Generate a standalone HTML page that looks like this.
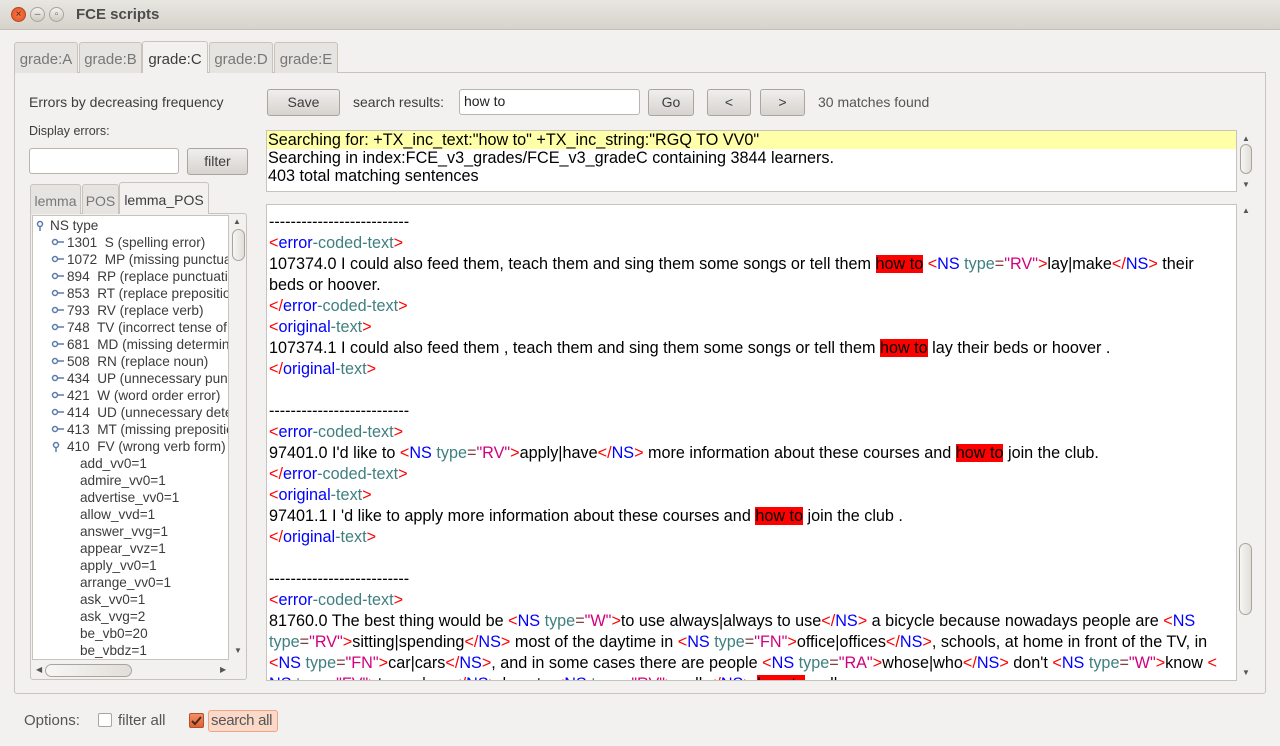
<!DOCTYPE html>
<html><head><meta charset="utf-8">
<style>
*{box-sizing:border-box;margin:0;padding:0}
body{width:1280px;height:746px;overflow:hidden;background:#f2f1f0;font-family:"Liberation Sans",sans-serif;position:relative;color:#3c3c3c}
.a{position:absolute}
.title{left:0;top:0;width:1280px;height:30px;background:linear-gradient(#e8e6e1,#d6d3cc);border-bottom:1px solid #c4c0b8}
.tb{width:15px;height:15px;border-radius:50%;top:7px;border:1px solid #a9a59c;background:linear-gradient(#f3f1ed,#cfcbc3);font-size:10px;line-height:13px;text-align:center;color:#666}
.btn{border:1px solid #aaa69e;border-radius:3px;background:linear-gradient(#f0efed,#d6d3cf);font-size:14px;text-align:center;color:#3c3c3c}
.tab{top:42px;height:31px;border:1px solid #c8c4bc;border-bottom:none;border-radius:3px 3px 0 0;background:#e6e4e0;font-size:15px;color:#777;text-align:center;line-height:34px}
.input{background:#fff;border:1px solid #b9b5ad;border-radius:3px}
.tree{font-size:13.6px;line-height:17px;color:#3c3c3c;white-space:nowrap}
.tree div{height:17px}
.res{font-size:16.2px;line-height:21px;color:#000;white-space:nowrap;font-family:"Liberation Sans",sans-serif}
.r{color:#f00}.b{color:#00f}.t{color:#3f7f7f}.m{color:#d0007f}.e{color:#7f3f3f}
.h{background:#f00;color:#000}
.sb{border:1px solid #a9a59c;border-radius:7px;background:linear-gradient(90deg,#f7f6f4,#e1ded9)}
.k{display:inline-block;width:14px;height:10px;margin-right:2px;vertical-align:0}
</style></head><body>
<div class="a title"></div>
<div class="a tb" style="left:11px;background:radial-gradient(#f47a4e,#e0521e);border-color:#b8461e;color:#5a1a05">×</div>
<div class="a tb" style="left:30px">–</div>
<div class="a tb" style="left:49px">▫</div>
<div class="a" style="left:76px;top:6px;font-size:15px;font-weight:bold;color:#4c4c4c">FCE scripts</div>

<div class="a" style="left:14px;top:72px;width:1252px;height:622px;border:1px solid #c8c4bc;border-radius:0 0 3px 3px;background:#f2f1f0"></div>
<div class="a tab" style="left:14px;width:64px">grade:A</div>
<div class="a tab" style="left:79px;width:63px">grade:B</div>
<div class="a tab" style="left:142px;width:66px;top:41px;height:32px;background:#f2f1f0;color:#3c3c3c;line-height:36px">grade:C</div>
<div class="a tab" style="left:209px;width:64px">grade:D</div>
<div class="a tab" style="left:274px;width:64px">grade:E</div>

<div class="a" style="left:29px;top:94px;font-size:14px">Errors by decreasing frequency</div>
<div class="a" style="left:29px;top:124px;font-size:12.5px">Display errors:</div>
<div class="a input" style="left:29px;top:148px;width:150px;height:26px"></div>
<div class="a btn" style="left:187px;top:148px;width:61px;height:27px;line-height:25px">filter</div>

<div class="a" style="left:30px;top:213px;width:217px;height:467px;border:1px solid #c8c4bc;border-radius:3px"></div>
<div class="a tab" style="left:30px;top:184px;width:51px;height:30px;line-height:32px;font-size:14px">lemma</div>
<div class="a tab" style="left:82px;top:184px;width:37px;height:30px;line-height:32px;font-size:14px">POS</div>
<div class="a tab" style="left:119px;top:182px;width:90px;height:32px;line-height:34px;font-size:14px;background:#f2f1f0;color:#3c3c3c">lemma_POS</div>
<div class="a" style="left:32px;top:215px;width:197px;height:445px;background:#fff;border:1px solid #c8c4bc;overflow:hidden">
<div class="tree" style="position:absolute;left:2px;top:1px">
<div><svg width="12" height="12" style="vertical-align:-2px;margin-right:3px"><circle cx="5" cy="4" r="2.5" fill="none" stroke="#5a7aa8" stroke-width="1.5"/><line x1="5" y1="6" x2="5" y2="11" stroke="#5a7aa8" stroke-width="1.5"/></svg>NS type</div>
</div>
<div class="tree" style="position:absolute;left:18px;top:18px">
<div><svg class="k"><circle cx="4" cy="5" r="2.5" fill="none" stroke="#5a7aa8" stroke-width="1.5"/><line x1="6" y1="5" x2="13" y2="5" stroke="#5a7aa8" stroke-width="1.5"/></svg>1301&nbsp; S (spelling error)</div>
<div><svg class="k"><circle cx="4" cy="5" r="2.5" fill="none" stroke="#5a7aa8" stroke-width="1.5"/><line x1="6" y1="5" x2="13" y2="5" stroke="#5a7aa8" stroke-width="1.5"/></svg>1072&nbsp; MP (missing punctuation)</div>
<div><svg class="k"><circle cx="4" cy="5" r="2.5" fill="none" stroke="#5a7aa8" stroke-width="1.5"/><line x1="6" y1="5" x2="13" y2="5" stroke="#5a7aa8" stroke-width="1.5"/></svg>894&nbsp; RP (replace punctuation)</div>
<div><svg class="k"><circle cx="4" cy="5" r="2.5" fill="none" stroke="#5a7aa8" stroke-width="1.5"/><line x1="6" y1="5" x2="13" y2="5" stroke="#5a7aa8" stroke-width="1.5"/></svg>853&nbsp; RT (replace preposition)</div>
<div><svg class="k"><circle cx="4" cy="5" r="2.5" fill="none" stroke="#5a7aa8" stroke-width="1.5"/><line x1="6" y1="5" x2="13" y2="5" stroke="#5a7aa8" stroke-width="1.5"/></svg>793&nbsp; RV (replace verb)</div>
<div><svg class="k"><circle cx="4" cy="5" r="2.5" fill="none" stroke="#5a7aa8" stroke-width="1.5"/><line x1="6" y1="5" x2="13" y2="5" stroke="#5a7aa8" stroke-width="1.5"/></svg>748&nbsp; TV (incorrect tense of verb)</div>
<div><svg class="k"><circle cx="4" cy="5" r="2.5" fill="none" stroke="#5a7aa8" stroke-width="1.5"/><line x1="6" y1="5" x2="13" y2="5" stroke="#5a7aa8" stroke-width="1.5"/></svg>681&nbsp; MD (missing determiner)</div>
<div><svg class="k"><circle cx="4" cy="5" r="2.5" fill="none" stroke="#5a7aa8" stroke-width="1.5"/><line x1="6" y1="5" x2="13" y2="5" stroke="#5a7aa8" stroke-width="1.5"/></svg>508&nbsp; RN (replace noun)</div>
<div><svg class="k"><circle cx="4" cy="5" r="2.5" fill="none" stroke="#5a7aa8" stroke-width="1.5"/><line x1="6" y1="5" x2="13" y2="5" stroke="#5a7aa8" stroke-width="1.5"/></svg>434&nbsp; UP (unnecessary punctuation)</div>
<div><svg class="k"><circle cx="4" cy="5" r="2.5" fill="none" stroke="#5a7aa8" stroke-width="1.5"/><line x1="6" y1="5" x2="13" y2="5" stroke="#5a7aa8" stroke-width="1.5"/></svg>421&nbsp; W (word order error)</div>
<div><svg class="k"><circle cx="4" cy="5" r="2.5" fill="none" stroke="#5a7aa8" stroke-width="1.5"/><line x1="6" y1="5" x2="13" y2="5" stroke="#5a7aa8" stroke-width="1.5"/></svg>414&nbsp; UD (unnecessary determiner)</div>
<div><svg class="k"><circle cx="4" cy="5" r="2.5" fill="none" stroke="#5a7aa8" stroke-width="1.5"/><line x1="6" y1="5" x2="13" y2="5" stroke="#5a7aa8" stroke-width="1.5"/></svg>413&nbsp; MT (missing preposition)</div>
<div><svg width="12" height="12" style="vertical-align:-2px;margin-right:4px"><circle cx="5" cy="4" r="2.5" fill="none" stroke="#5a7aa8" stroke-width="1.5"/><line x1="5" y1="6" x2="5" y2="11" stroke="#5a7aa8" stroke-width="1.5"/></svg>410&nbsp; FV (wrong verb form)</div>
</div>
<div class="tree" style="position:absolute;left:47px;top:239px">
<div>add_vv0=1</div><div>admire_vv0=1</div><div>advertise_vv0=1</div><div>allow_vvd=1</div><div>answer_vvg=1</div><div>appear_vvz=1</div><div>apply_vv0=1</div><div>arrange_vv0=1</div><div>ask_vv0=1</div><div>ask_vvg=2</div><div>be_vb0=20</div><div>be_vbdz=1</div>
</div>
</div>
<div class="a" style="left:233px;top:217px;font-size:8px;color:#555">▲</div>
<div class="a sb" style="left:232px;top:229px;width:13px;height:32px"></div>
<div class="a" style="left:234px;top:646px;font-size:8px;color:#555">▼</div>
<div class="a sb" style="left:45px;top:664px;width:87px;height:13px"></div>
<div class="a" style="left:36px;top:665px;font-size:8px;color:#555">◀</div>
<div class="a" style="left:220px;top:665px;font-size:8px;color:#555">▶</div>

<div class="a btn" style="left:267px;top:89px;width:73px;height:27px;line-height:25px">Save</div>
<div class="a" style="left:353px;top:94px;font-size:14px">search results:</div>
<div class="a input" style="left:459px;top:89px;width:181px;height:26px;font-size:14px;padding:3px 4px;color:#222">how to</div>
<div class="a btn" style="left:648px;top:89px;width:46px;height:27px;line-height:25px">Go</div>
<div class="a btn" style="left:707px;top:89px;width:44px;height:27px;line-height:25px">&lt;</div>
<div class="a btn" style="left:760px;top:89px;width:45px;height:27px;line-height:25px">&gt;</div>
<div class="a" style="left:818px;top:94px;font-size:14px;color:#555">30 matches found</div>

<div class="a" style="left:266px;top:130px;width:971px;height:62px;background:#fff;border:1px solid #c8c4bc"></div>
<div class="a" style="left:267px;top:131px;width:969px;height:18px;background:#ffffa8"></div>
<div class="a res" style="left:268px;top:131px;line-height:18px">
<div>Searching for: +TX_inc_text:"how to" +TX_inc_string:"RGQ TO VV0"</div>
<div>Searching in index:FCE_v3_grades/FCE_v3_gradeC containing 3844 learners.</div>
<div>403 total matching sentences</div></div>
<div class="a" style="left:1242px;top:134px;font-size:8px;color:#555">▲</div>
<div class="a sb" style="left:1240px;top:144px;width:12px;height:30px"></div>
<div class="a" style="left:1242px;top:180px;font-size:8px;color:#555">▼</div>

<div class="a" style="left:266px;top:204px;width:971px;height:477px;background:#fff;border:1px solid #c8c4bc;overflow:hidden">
<div class="res" style="position:absolute;left:2px;top:7px">
<div>--------------------------</div>
<div><span class="r">&lt;</span><span class="b">error</span><span class="t">-coded-text</span><span class="r">&gt;</span></div>
<div>107374.0 I could also feed them, teach them and sing them some songs or tell them <span class="h">how to</span> <span class="r">&lt;</span><span class="b">NS</span> <span class="t">type</span><span class="e">=</span><span class="m">"RV"</span><span class="r">&gt;</span>lay|make<span class="r">&lt;/</span><span class="b">NS</span><span class="r">&gt;</span> their</div>
<div>beds or hoover.</div>
<div><span class="r">&lt;/</span><span class="b">error</span><span class="t">-coded-text</span><span class="r">&gt;</span></div>
<div><span class="r">&lt;</span><span class="b">original</span><span class="t">-text</span><span class="r">&gt;</span></div>
<div>107374.1 I could also feed them , teach them and sing them some songs or tell them <span class="h">how to</span> lay their beds or hoover .</div>
<div><span class="r">&lt;/</span><span class="b">original</span><span class="t">-text</span><span class="r">&gt;</span></div>
<div>&nbsp;</div>
<div>--------------------------</div>
<div><span class="r">&lt;</span><span class="b">error</span><span class="t">-coded-text</span><span class="r">&gt;</span></div>
<div>97401.0 I'd like to <span class="r">&lt;</span><span class="b">NS</span> <span class="t">type</span><span class="e">=</span><span class="m">"RV"</span><span class="r">&gt;</span>apply|have<span class="r">&lt;/</span><span class="b">NS</span><span class="r">&gt;</span> more information about these courses and <span class="h">how to</span> join the club.</div>
<div><span class="r">&lt;/</span><span class="b">error</span><span class="t">-coded-text</span><span class="r">&gt;</span></div>
<div><span class="r">&lt;</span><span class="b">original</span><span class="t">-text</span><span class="r">&gt;</span></div>
<div>97401.1 I 'd like to apply more information about these courses and <span class="h">how to</span> join the club .</div>
<div><span class="r">&lt;/</span><span class="b">original</span><span class="t">-text</span><span class="r">&gt;</span></div>
<div>&nbsp;</div>
<div>--------------------------</div>
<div><span class="r">&lt;</span><span class="b">error</span><span class="t">-coded-text</span><span class="r">&gt;</span></div>
<div>81760.0 The best thing would be <span class="r">&lt;</span><span class="b">NS</span> <span class="t">type</span><span class="e">=</span><span class="m">"W"</span><span class="r">&gt;</span>to use always|always to use<span class="r">&lt;/</span><span class="b">NS</span><span class="r">&gt;</span> a bicycle because nowadays people are <span class="r">&lt;</span><span class="b">NS</span></div>
<div><span class="t">type</span><span class="e">=</span><span class="m">"RV"</span><span class="r">&gt;</span>sitting|spending<span class="r">&lt;/</span><span class="b">NS</span><span class="r">&gt;</span> most of the daytime in <span class="r">&lt;</span><span class="b">NS</span> <span class="t">type</span><span class="e">=</span><span class="m">"FN"</span><span class="r">&gt;</span>office|offices<span class="r">&lt;/</span><span class="b">NS</span><span class="r">&gt;</span>, schools, at home in front of the TV, in</div>
<div><span class="r">&lt;</span><span class="b">NS</span> <span class="t">type</span><span class="e">=</span><span class="m">"FN"</span><span class="r">&gt;</span>car|cars<span class="r">&lt;/</span><span class="b">NS</span><span class="r">&gt;</span>, and in some cases there are people <span class="r">&lt;</span><span class="b">NS</span> <span class="t">type</span><span class="e">=</span><span class="m">"RA"</span><span class="r">&gt;</span>whose|who<span class="r">&lt;/</span><span class="b">NS</span><span class="r">&gt;</span> don't <span class="r">&lt;</span><span class="b">NS</span> <span class="t">type</span><span class="e">=</span><span class="m">"W"</span><span class="r">&gt;</span>know <span class="r">&lt;</span></div>
<div><span class="b">NS</span> <span class="t">type</span><span class="e">=</span><span class="m">"FV"</span><span class="r">&gt;</span>to use|use<span class="r">&lt;/</span><span class="b">NS</span><span class="r">&gt;</span> how to <span class="r">&lt;</span><span class="b">NS</span> <span class="t">type</span><span class="e">=</span><span class="m">"RV"</span><span class="r">&gt;</span>walk<span class="r">&lt;/</span><span class="b">NS</span><span class="r">&gt;</span> <span class="h">how to</span> walk</div>
</div></div>
<div class="a" style="left:1242px;top:206px;font-size:8px;color:#555">▲</div>
<div class="a sb" style="left:1239px;top:543px;width:13px;height:72px"></div>
<div class="a" style="left:1242px;top:668px;font-size:8px;color:#555">▼</div>

<div class="a" style="left:24px;top:712px;font-size:15px;color:#555">Options:</div>
<div class="a" style="left:98px;top:713px;width:14px;height:14px;border:1px solid #a9a59c;border-radius:2px;background:#fff"></div>
<div class="a" style="left:118px;top:712px;font-size:15px;color:#555">filter all</div>
<div class="a" style="left:189px;top:713px;width:15px;height:15px;border:1px solid #b5502a;border-radius:2px;background:linear-gradient(#f39067,#e0622e)"><svg width="13" height="13" style="position:absolute;left:0;top:0"><path d="M2 7 L5 10 L11 3" fill="none" stroke="#4a2a1a" stroke-width="2"/></svg></div>
<div class="a" style="left:208px;top:710px;width:70px;height:22px;border:1px solid #f0a482;border-radius:3px;background:#fbd9c9;font-size:15px;color:#555;padding:1px 2px;white-space:nowrap;letter-spacing:-0.3px">search all</div>
</body></html>
